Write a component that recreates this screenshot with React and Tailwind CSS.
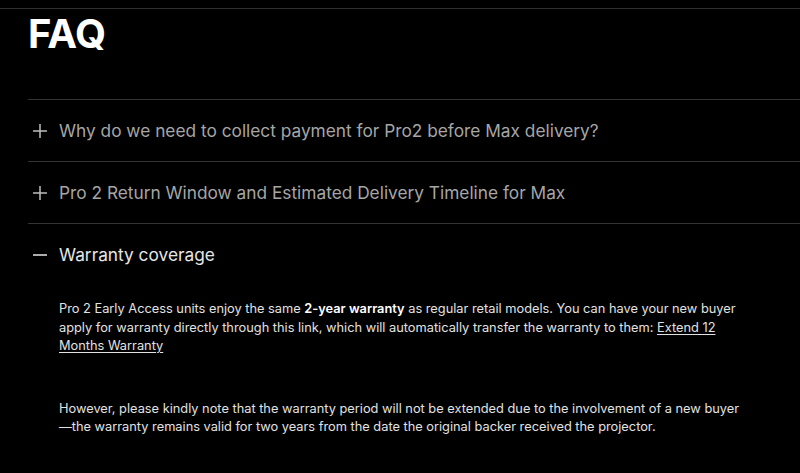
import React from 'react';

const questions = [
  { q: 'Why do we need to collect payment for Pro2 before Max delivery?', open: false },
  { q: 'Pro 2 Return Window and Estimated Delivery Timeline for Max', open: false },
];

function Plus() {
  return (
    <svg width="14" height="14" viewBox="0 0 14 14" className="shrink-0">
      <path d="M7 0v14M0 7h14" stroke="#bdbdbd" strokeWidth="1.5" />
    </svg>
  );
}

function Minus() {
  return (
    <svg width="14" height="14" viewBox="0 0 14 14" className="shrink-0">
      <path d="M0 7h14" stroke="#e6e6e6" strokeWidth="1.5" />
    </svg>
  );
}

export default function App() {
  return (
    <div className="w-[800px] h-[473px] overflow-hidden bg-black pt-2" style={{ fontFamily: 'Inter, "Noto Sans", sans-serif' }}>
      <div className="h-px bg-[#2e2e2e]" />
      <div className="pl-[28px]">
        <h1 className="pt-[1px] text-[40px] leading-[48px] font-bold text-white tracking-[-0.5px]">FAQ</h1>
        <div className="mt-[41px] border-t border-[#333]">
          {questions.map((item) => (
            <div key={item.q} className="border-b border-[#333] h-[62px] flex items-center gap-[12px] pl-[5px]">
              <Plus />
              <span className="text-[17.3px] text-[#a6a6a6]">{item.q}</span>
            </div>
          ))}
          <div className="h-[61px] flex items-center gap-[12px] pl-[5px]">
            <Minus />
            <span className="text-[17.3px] text-[#e6e6e6]">Warranty coverage</span>
          </div>
          <div className="pl-[31px] pr-[50px] pt-[15px] text-[12.8px] leading-[18.5px] text-[#e2e2e2]">
            <p>
              Pro 2 Early Access units enjoy the same <strong className="font-semibold text-white">2-year warranty</strong> as regular retail models. You can have your new buyer apply for warranty directly through this link, which will automatically transfer the warranty to them:{' '}
              <a className="underline underline-offset-2">Extend 12 Months Warranty</a>
            </p>
            <p className="mt-[44px]">
              However, please kindly note that the warranty period will not be extended due to the involvement of a new buyer —the warranty remains valid for two years from the date the original backer received the projector.
            </p>
          </div>
        </div>
      </div>
    </div>
  );
}
